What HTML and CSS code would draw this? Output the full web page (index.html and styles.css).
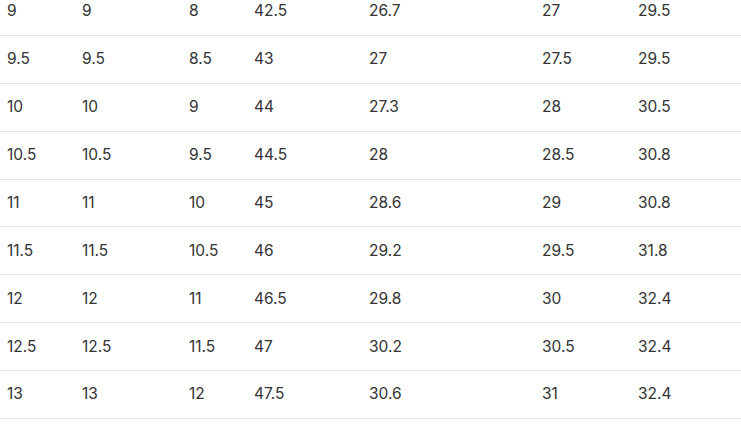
FILE: index.html
```html
<!DOCTYPE html>
<html>
<head>
<meta charset="utf-8">
<link rel="stylesheet" href="styles.css">
</head>
<body>
<table class="sizes">
<colgroup>
<col class="c1"><col class="c2"><col class="c3"><col class="c4"><col class="c5"><col class="c6"><col class="c7">
</colgroup>
<tbody>
<tr><td>9</td><td>9</td><td>8</td><td>42.5</td><td>26.7</td><td>27</td><td>29.5</td></tr>
<tr><td>9.5</td><td>9.5</td><td>8.5</td><td>43</td><td>27</td><td>27.5</td><td>29.5</td></tr>
<tr><td>10</td><td>10</td><td>9</td><td>44</td><td>27.3</td><td>28</td><td>30.5</td></tr>
<tr><td>10.5</td><td>10.5</td><td>9.5</td><td>44.5</td><td>28</td><td>28.5</td><td>30.8</td></tr>
<tr><td>11</td><td>11</td><td>10</td><td>45</td><td>28.6</td><td>29</td><td>30.8</td></tr>
<tr><td>11.5</td><td>11.5</td><td>10.5</td><td>46</td><td>29.2</td><td>29.5</td><td>31.8</td></tr>
<tr><td>12</td><td>12</td><td>11</td><td>46.5</td><td>29.8</td><td>30</td><td>32.4</td></tr>
<tr><td>12.5</td><td>12.5</td><td>11.5</td><td>47</td><td>30.2</td><td>30.5</td><td>32.4</td></tr>
<tr><td>13</td><td>13</td><td>12</td><td>47.5</td><td>30.6</td><td>31</td><td>32.4</td></tr>
</tbody>
</table>
</body>
</html>
```
FILE: styles.css
```css
html, body {
  margin: 0;
  padding: 0;
  background: #fff;
}
.sizes {
  width: 741px;
  border-collapse: collapse;
  table-layout: fixed;
  margin-top: -12px;
  font-family: Inter, "Open Sans", sans-serif;
  font-size: 15.5px;
  color: #333;
}
.c1 { width: 75px; }
.c2 { width: 107px; }
.c3 { width: 65px; }
.c4 { width: 115px; }
.c5 { width: 173px; }
.c6 { width: 96px; }
.c7 { width: 110px; }
.sizes td {
  height: 46.875px;
  padding: 0 0 0 7px;
  border-bottom: 1px solid #e4e4e4;
  vertical-align: middle;
  line-height: 18px;
}
```
